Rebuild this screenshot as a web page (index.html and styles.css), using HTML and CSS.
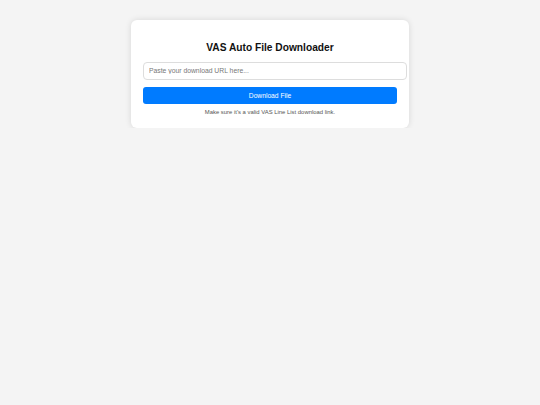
FILE: index.html
```html
<!DOCTYPE html>
<html>
<head>
<meta charset="utf-8">
<link rel="stylesheet" href="styles.css">
</head>
<body>
<div class="card">
  <h2 class="title">VAS Auto File Downloader</h2>
  <input class="url" type="text" placeholder="Paste your download URL here...">
  <button class="btn">Download File</button>
  <p class="note">Make sure it's a valid VAS Line List download link.</p>
</div>
</body>
</html>
```
FILE: styles.css
```css
html, body {
  margin: 0;
  padding: 0;
}
body {
  background: #f4f4f4;
  font-family: "Liberation Sans", Arial, sans-serif;
  padding-top: 20px;
}
.card {
  width: 254px;
  margin: 0 auto;
  background: #fff;
  padding: 12px 12px 12px;
  border-radius: 6px;
  box-shadow: 0 0 6px rgba(0,0,0,0.12);
  text-align: center;
}
.title {
  font-size: 10.2px;
  font-weight: bold;
  color: #111;
  margin: 10px 0 8px;
  line-height: 12px;
}
.url {
  display: block;
  width: 100%;
  padding: 4px 3px 4px 5px;
  height: 8px;
  line-height: 8px;
  border: 1px solid #ddd;
  border-radius: 4px;
  font-family: "Liberation Sans", Arial, sans-serif;
  font-size: 6.8px;
  color: #333;
  margin: 0;
  outline: none;
}
.url::placeholder {
  color: #777;
}
.btn {
  display: block;
  width: 100%;
  margin-top: 7px;
  height: 17px;
  padding: 0;
  border: none;
  border-radius: 3px;
  background: #007bff;
  color: #fff;
  font-family: "Liberation Sans", Arial, sans-serif;
  font-size: 6.7px;
}
.note {
  margin: 5px 0 0;
  font-size: 5.9px;
  color: #555;
  line-height: 7px;
}
```
